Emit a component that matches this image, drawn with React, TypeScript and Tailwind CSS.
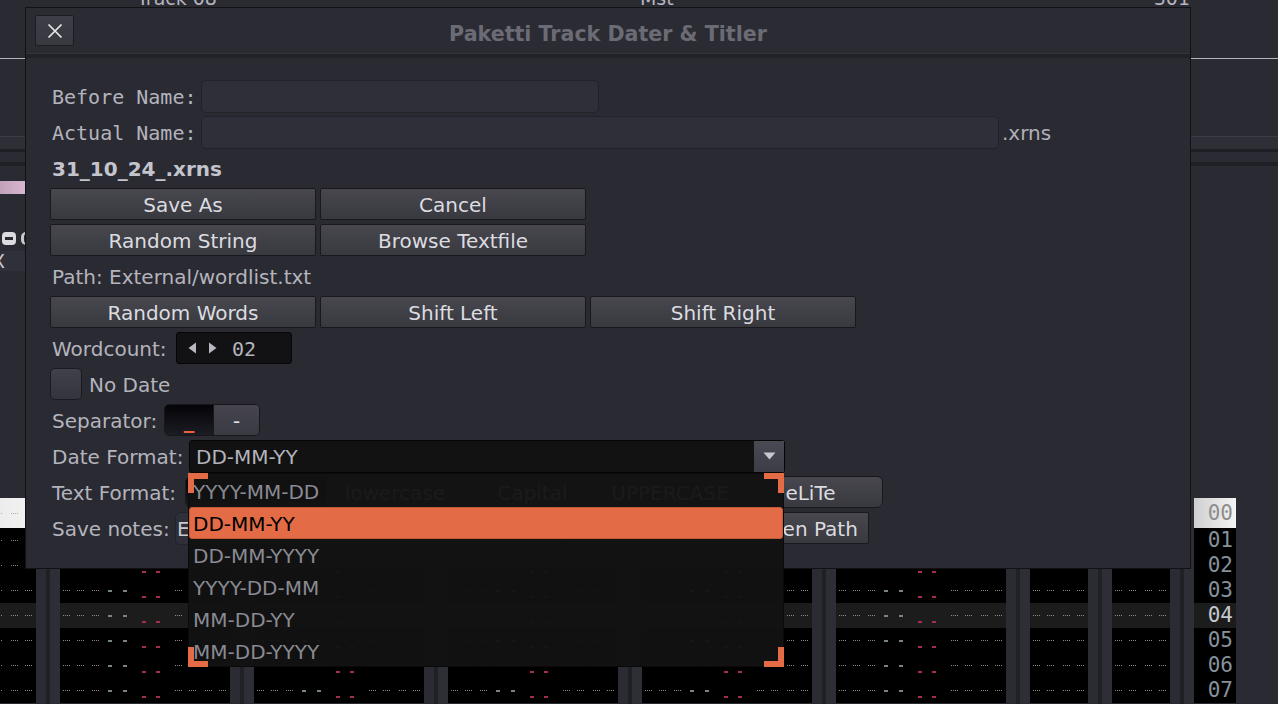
import React from "react";

type Item = { t: "dot" | "gd" | "rd"; c: string };

const FULL: Item[] = [
  { t: "dot", c: "ml-[3px]" },
  { t: "dot", c: "ml-[7px]" },
  { t: "dot", c: "ml-[8px]" },
  { t: "gd", c: "ml-[9px]" },
  { t: "gd", c: "ml-[11px]" },
  { t: "rd", c: "ml-[15px]" },
  { t: "rd", c: "ml-[10px]" },
  { t: "dot", c: "ml-[15px]" },
  { t: "dot", c: "ml-[7px]" },
  { t: "dot", c: "ml-[9px]" },
  { t: "dot", c: "ml-[7px]" },
];

const NARROW: Item[] = [
  { t: "dot", c: "ml-[3px]" },
  { t: "dot", c: "ml-[7px]" },
  { t: "dot", c: "ml-[9px]" },
  { t: "dot", c: "ml-[7px]" },
];

const ROWS = [0, 1, 2, 3, 4, 5, 6, 7];

function rowCls(i: number) {
  if (i === 0) return "h-[30px] bg-linear-to-r from-[#d4d4d4] to-[#f3f3f3]";
  if (i === 4) return "h-[25px] bg-[#1c1c1c]";
  return "h-[25px] bg-black";
}

function Cell({ it, light }: { it: Item; light: boolean }) {
  if (it.t === "dot")
    return (
      <span
        className={`${it.c} w-[7px] shrink-0 self-center border-t border-dotted ${
          light ? "border-[#b0b0b0]" : "border-[#8a8a8a]"
        }`}
      />
    );
  if (it.t === "gd")
    return (
      <span
        className={`${it.c} w-[4px] h-[2px] shrink-0 self-center ${
          light ? "bg-[#b0b0b0]" : "bg-[#78848c]"
        }`}
      />
    );
  return <span className={`${it.c} w-[4px] h-[2px] shrink-0 self-end mb-[5px] bg-[#a3304a]`} />;
}

function Track({ items, w }: { items: Item[]; w: string }) {
  return (
    <div className={`${w} shrink-0 flex flex-col`}>
      {ROWS.map((i) => (
        <div key={i} className={`${rowCls(i)} flex shrink-0`}>
          {items.map((it, k) => (
            <Cell key={k} it={it} light={i === 0} />
          ))}
        </div>
      ))}
    </div>
  );
}

function Sep() {
  return (
    <div className="w-[24px] shrink-0 flex">
      <div className="w-[10px] bg-[#2b2b34]" />
      <div className="w-[4px] bg-[#202027]" />
      <div className="w-[10px] bg-[#2e2e37]" />
    </div>
  );
}

const NUMS = ["00", "01", "02", "03", "04", "05", "06", "07"];

function LineNumbers() {
  return (
    <div className="w-[42px] shrink-0 flex flex-col font-['DejaVu_Sans_Mono',monospace] text-[21px]">
      {NUMS.map((n, i) => (
        <div
          key={n}
          className={`${
            i === 0
              ? "h-[30px] bg-linear-to-r from-[#cfcfcf] to-[#f4f4f4] text-[#8e8e8e]"
              : i === 4
              ? "h-[25px] bg-[#1c1c1c] text-[#c4c8cc]"
              : "h-[25px] bg-black text-[#86919a]"
          } shrink-0 flex items-center justify-end pr-[3px] leading-none`}
        >
          {n}
        </div>
      ))}
    </div>
  );
}

function Btn({ children, w, extra = "" }: { children?: React.ReactNode; w: string; extra?: string }) {
  return (
    <div
      className={`${w} ${extra} h-[32px] shrink-0 flex items-center justify-center pt-[1px] rounded-[2px] border border-[#19191d] bg-linear-to-b from-[#48474f] to-[#38383f] text-[#dcdce0]`}
    >
      {children}
    </div>
  );
}

const ORANGE = "border-[#e36c47]";
const SEG = "h-full border-l border-[#18181c] bg-linear-to-b from-[#48474f] to-[#38383f] flex items-center justify-center pt-[1px]";

export default function App() {
  return (
    <div className="relative w-[1278px] h-[704px] overflow-hidden bg-[#2a2a33] font-['DejaVu_Sans',sans-serif] text-[20px]">
      {/* Background application */}
      <div className="flex flex-col h-full">
        <div className="h-[8px] shrink-0 overflow-hidden flex items-end leading-none text-[19px] text-[#b4b4bc]">
          <span className="ml-[137px]">Track 08</span>
          <span className="ml-[423px]">Mst</span>
          <span className="ml-auto mr-[88px]">301</span>
        </div>
        <div className="h-[50px] shrink-0" />
        <div className="h-px shrink-0 bg-[#b4b4bc]" />
        <div className="h-[77px] shrink-0" />
        <div className="h-px shrink-0 bg-[#3c3c46]" />
        <div className="h-[12px] shrink-0 bg-[#2e2e37]" />
        <div className="h-[3px] shrink-0 bg-[#1e1e25]" />
        <div className="h-[10px] shrink-0 bg-[#2b2b34]" />
        <div className="h-[4px] shrink-0 bg-[#1f1f26]" />
        <div className="h-[15px] shrink-0" />
        <div className="h-[13px] w-[26px] shrink-0 bg-linear-to-r from-[#c2a2ba] to-[#d8b8d0]" />
        <div className="h-[38px] shrink-0" />
        <div className="h-[13px] shrink-0 flex items-center">
          <span className="ml-[2px] w-[14px] h-[13px] rounded-[4px] bg-[#dcdce0] flex items-center justify-center">
            <span className="w-[8px] h-[3px] bg-[#2a2a33]" />
          </span>
          <span className="ml-[5px] w-[8px] h-[13px] rounded-l-[5px] border-l-[3px] border-y-[2px] border-[#c8c8cc]" />
        </div>
        <div className="h-[6px] shrink-0" />
        <div className="h-[20px] w-[26px] shrink-0 bg-[#30303a] overflow-hidden flex items-center text-[19px] leading-none text-[#c8c8d0]">
          <span className="-ml-[8px]">X</span>
        </div>
        <div className="flex-1" />
        <div className="h-[206px] shrink-0 flex overflow-hidden">
          <div className="w-[36px] shrink-0 overflow-hidden flex">
            <div className="-ml-[134px] flex">
              <Track items={FULL} w="w-[170px]" />
            </div>
          </div>
          <Sep />
          <Track items={FULL} w="w-[170px]" />
          <Sep />
          <Track items={FULL} w="w-[170px]" />
          <Sep />
          <Track items={FULL} w="w-[170px]" />
          <Sep />
          <Track items={FULL} w="w-[170px]" />
          <Sep />
          <Track items={FULL} w="w-[170px]" />
          <Sep />
          <Track items={NARROW} w="w-[58px]" />
          <Sep />
          <Track items={NARROW} w="w-[58px]" />
          <Sep />
          <LineNumbers />
          <div className="flex-1" />
        </div>
      </div>

      {/* Dialog */}
      <div className="absolute left-[25px] top-[7px] w-[1166px] h-[562px] border border-[#121215] bg-[#2a2a33] flex flex-col">
        <div className="h-[45px] shrink-0 grid grid-cols-[1fr_auto_1fr] items-center bg-[#2b2b34]">
          <div className="pl-[9px] flex">
            <div className="w-[39px] h-[31px] rounded-[2px] border border-[#1c1c21] bg-linear-to-b from-[#3e3e48] to-[#383841] flex items-center justify-center">
              <svg width="16" height="16" viewBox="0 0 16 16">
                <path d="M1.5 1.5 L14.5 14.5 M14.5 1.5 L1.5 14.5" stroke="#e6e6ea" strokeWidth="1.7" fill="none" />
              </svg>
            </div>
          </div>
          <div className="text-[20.6px] font-bold text-[#6b6b75] leading-none pt-[8px]">Paketti Track Dater &amp; Titler</div>
          <div />
        </div>
        <div className="h-px shrink-0 bg-[#33333c]" />
        <div className="h-[4px] shrink-0 bg-[#212128]" />

        <div className="pt-[22px] pl-[24px] flex flex-col gap-[4px] text-[#b4b4bc]">
          {/* Before Name */}
          <div className="h-[32px] flex items-center">
            <span className="w-[151px] shrink-0 pl-[2px] pt-[2px] font-['DejaVu_Sans_Mono',monospace]">Before Name:</span>
            <div className="w-[398px] h-[33px] rounded-[5px] border border-[#222229] bg-[#2e2f38]" />
          </div>
          {/* Actual Name */}
          <div className="h-[32px] flex items-center">
            <span className="w-[151px] shrink-0 pl-[2px] pt-[2px] font-['DejaVu_Sans_Mono',monospace]">Actual Name:</span>
            <div className="w-[798px] h-[33px] rounded-[5px] border border-[#222229] bg-[#2e2f38]" />
            <span className="ml-[3px] pt-[2px] text-[#b0b0b8]">.xrns</span>
          </div>
          {/* filename */}
          <div className="h-[32px] flex items-center">
            <span className="pl-[2px] pt-[1px] font-bold text-[20px] text-[#c4c4cc]">31_10_24_.xrns</span>
          </div>
          {/* Save As / Cancel */}
          <div className="h-[32px] flex gap-[4px]">
            <Btn w="w-[266px]">Save As</Btn>
            <Btn w="w-[266px]">Cancel</Btn>
          </div>
          <div className="h-[32px] flex gap-[4px]">
            <Btn w="w-[266px]">Random String</Btn>
            <Btn w="w-[266px]">Browse Textfile</Btn>
          </div>
          {/* Path */}
          <div className="h-[32px] flex items-center">
            <span className="pl-[2px] pt-[2px]">Path: External/wordlist.txt</span>
          </div>
          <div className="h-[32px] flex gap-[4px]">
            <Btn w="w-[266px]">Random Words</Btn>
            <Btn w="w-[266px]">Shift Left</Btn>
            <Btn w="w-[266px]">Shift Right</Btn>
          </div>
          {/* Wordcount */}
          <div className="h-[32px] flex items-center">
            <span className="w-[126px] shrink-0 pl-[2px] pt-[2px]">Wordcount:</span>
            <div className="w-[116px] h-[32px] rounded-[3px] border border-[#050506] bg-[#121214] flex items-center pl-[11px]">
              <svg width="9" height="12" viewBox="0 0 9 12">
                <polygon points="8,0.5 8,11.5 0.5,6" fill="#b8b8c0" />
              </svg>
              <svg className="ml-[11px]" width="9" height="12" viewBox="0 0 9 12">
                <polygon points="1,0.5 1,11.5 8.5,6" fill="#b8b8c0" />
              </svg>
              <span className="ml-[15px] pt-[2px] font-['DejaVu_Sans_Mono',monospace] text-[20px] text-[#b4b4bc]">02</span>
            </div>
          </div>
          {/* No Date */}
          <div className="h-[32px] flex items-center">
            <div className="w-[32px] h-[32px] rounded-[5px] border border-[#1a1a1f] bg-linear-to-b from-[#41414b] to-[#34343d]" />
            <span className="ml-[7px] pt-[2px]">No Date</span>
          </div>
          {/* Separator */}
          <div className="h-[32px] flex items-center">
            <span className="w-[114px] shrink-0 pl-[2px] pt-[2px]">Separator:</span>
            <div className="w-[96px] h-[32px] rounded-[5px] border border-[#17171b] overflow-hidden flex">
              <div className="w-[48px] h-full bg-linear-to-b from-[#050508] to-[#1c1c24] flex items-center justify-center pt-[3px] text-[21px] font-bold text-[#f0603a]">
                _
              </div>
              <div className="w-px h-full bg-[#17171b]" />
              <div className="flex-1 h-full bg-linear-to-b from-[#46454f] to-[#3a3a43] flex items-center justify-center pt-[1px] text-[#e4e4e8]">
                -
              </div>
            </div>
          </div>
          {/* Date Format */}
          <div className="h-[32px] flex items-center">
            <span className="w-[139px] shrink-0 pl-[2px] pt-[2px]">Date Format:</span>
            <div className="w-[596px] h-[33px] rounded-[3px] border border-[#060606] bg-[#121212] flex items-center">
              <span className="pl-[6px] pt-[2px] text-[#b4b4bc]">DD-MM-YY</span>
              <div className="ml-auto w-[30px] h-full bg-linear-to-b from-[#4a4a54] to-[#3c3c46] flex items-center justify-center">
                <svg width="13" height="8" viewBox="0 0 13 8">
                  <polygon points="0.5,0.5 12.5,0.5 6.5,7.5" fill="#c8c8d0" />
                </svg>
              </div>
            </div>
          </div>
          {/* Text Format */}
          <div className="h-[32px] flex items-center">
            <span className="w-[135px] shrink-0 pl-[2px] pt-[2px]">Text Format:</span>
            <div className="h-[32px] flex rounded-[6px] border border-[#18181c] overflow-hidden text-[#dcdce0]">
              <div className="w-[140px] h-full bg-linear-to-b from-[#050508] to-[#1c1c24]" />
              <div className={`w-[137px] ${SEG}`}>lowercase</div>
              <div className={`w-[138px] ${SEG}`}>Capital</div>
              <div className={`w-[137px] ${SEG}`}>UPPERCASE</div>
              <div className={`w-[144px] ${SEG}`}>eLiTe</div>
            </div>
          </div>
          {/* Save notes */}
          <div className="h-[32px] flex items-center">
            <span className="w-[125px] shrink-0 pl-[2px] pt-[2px]">Save notes:</span>
            <div className="w-[390px] h-[33px] rounded-[5px] border border-[#222229] bg-[#2e2f38] flex items-center pl-[1px] pt-[2px] text-[#c8c8d0]">
              External/notes.txt
            </div>
            <Btn w="w-[106px]" extra="ml-[2px]">Browse</Btn>
            <Btn w="w-[70px]">Save</Btn>
            <Btn w="w-[126px]">Open Path</Btn>
          </div>
        </div>
      </div>

      {/* Popup list */}
      <div className="absolute left-[188px] top-[473px] w-[596px] h-[194px] border border-[#0a0a0a] bg-[#121212]/96 flex flex-col pt-px text-[20px]">
        {["YYYY-MM-DD", "DD-MM-YY", "DD-MM-YYYY", "YYYY-DD-MM", "MM-DD-YY", "MM-DD-YYYY"].map((s) =>
          s === "DD-MM-YY" ? (
            <div
              key={s}
              className="h-[32px] shrink-0 flex items-center pl-[3px] pt-[1px] rounded-[3px] border border-[#c25a38] bg-[#e36c47] text-black"
            >
              {s}
            </div>
          ) : (
            <div key={s} className="h-[32px] shrink-0 flex items-center pl-[4px] pt-[1px] text-[#8a8a92]">
              {s}
            </div>
          )
        )}
        <span className={`absolute -left-px -top-px w-[20px] h-[20px] border-l-[6px] border-t-[6px] ${ORANGE}`} />
        <span className={`absolute -right-px -top-px w-[20px] h-[20px] border-r-[6px] border-t-[6px] ${ORANGE}`} />
        <span className={`absolute -left-px -bottom-px w-[20px] h-[20px] border-l-[6px] border-b-[6px] ${ORANGE}`} />
        <span className={`absolute -right-px -bottom-px w-[20px] h-[20px] border-r-[6px] border-b-[6px] ${ORANGE}`} />
      </div>
    </div>
  );
}
